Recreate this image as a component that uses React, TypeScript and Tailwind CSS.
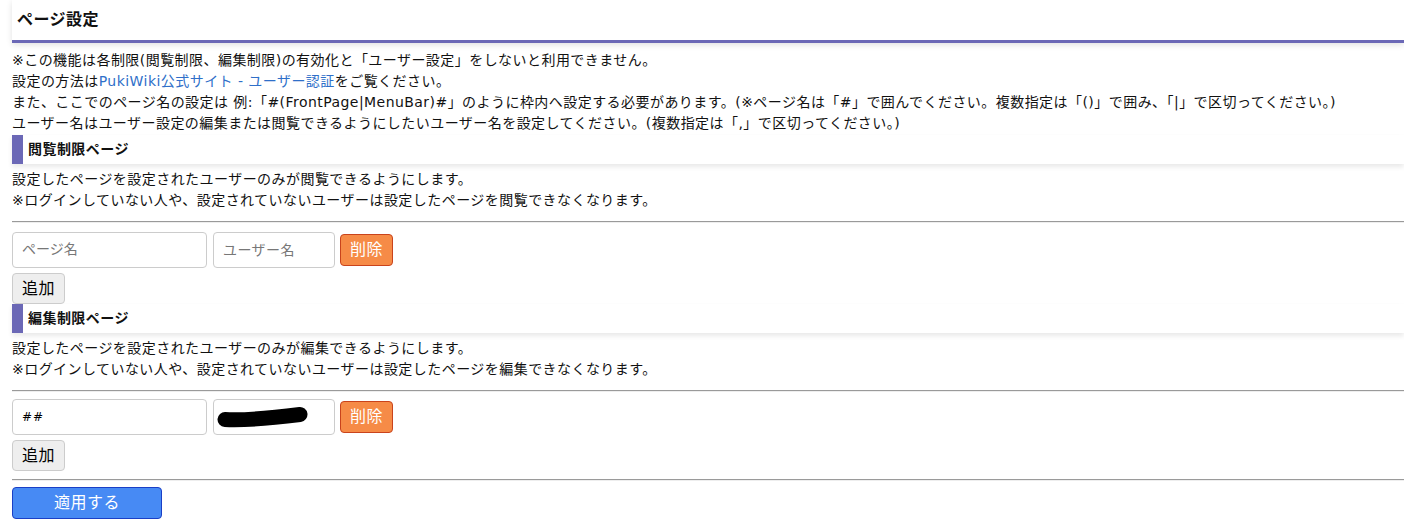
import React from 'react';

const Hr = ({ className = '' }: { className?: string }) => (
  <div className={`border-t border-b border-t-[#9a9a9a] border-b-[#eeeeee] ${className}`} />
);

const SectionHeader = ({ title }: { title: string }) => (
  <div className="flex h-[29px] items-center border-l-[11px] border-[#6b68b6] bg-white pl-[5px] text-[14px] font-bold shadow-[0_3px_5px_rgba(0,0,0,0.09)]">
    {title}
  </div>
);

interface RuleRowProps {
  page?: string;
  redacted?: boolean;
}

const RuleRow: React.FC<RuleRowProps> = ({ page, redacted }) => (
  <div className="flex items-center">
    <input
      type="text"
      placeholder="ページ名"
      defaultValue={page}
      className="h-[36px] w-[195px] rounded-[4px] border border-[#cccccc] bg-white px-[9px] text-[12px] tracking-[1px] text-black outline-none placeholder:text-[14px] placeholder:tracking-normal placeholder:text-[#777777]"
    />
    <div className="relative ml-[6px]">
      <input
        type="text"
        placeholder={redacted ? '' : 'ユーザー名'}
        className="h-[36px] w-[122px] rounded-[4px] border border-[#cccccc] bg-white px-[9px] text-[14px] outline-none placeholder:text-[#777777]"
      />
      {redacted && (
        <svg className="absolute left-0 top-0" width="122" height="36" viewBox="0 0 122 36">
          {/* redaction scribble */}
          <path
            d="M12 20.5 C 30 21.5, 55 19.5, 87 15.5"
            stroke="#000"
            strokeWidth="15"
            strokeLinecap="round"
            fill="none"
          />
        </svg>
      )}
    </div>
    <button
      type="button"
      className="ml-[5px] h-[32px] w-[53px] rounded-[4px] border border-[#c9431c] bg-[#f68b47] text-[16px] text-white"
    >
      削除
    </button>
  </div>
);

const AddButton = () => (
  <button
    type="button"
    className="mt-[5px] h-[31px] w-[53px] rounded-[4px] border border-[#cccccc] bg-[#eeeeee] text-[16px] text-black"
  >
    追加
  </button>
);

interface RestrictionSectionProps {
  title: string;
  verb: string;
  page?: string;
  redacted?: boolean;
  rowClass?: string;
}

const RestrictionSection: React.FC<RestrictionSectionProps> = ({ title, verb, page, redacted, rowClass = 'mt-[9px]' }) => (
  <div>
    <SectionHeader title={title} />
    <div className="mt-[5px] text-[14px] leading-[21px]">
      <p>設定したページを設定されたユーザーのみが{verb}できるようにします。</p>
      <p>※ログインしていない人や、設定されていないユーザーは設定したページを{verb}できなくなります。</p>
    </div>
    <Hr className="mt-[10px]" />
    <div className={rowClass}>
      <RuleRow page={page} redacted={redacted} />
    </div>
    <AddButton />
  </div>
);

const App: React.FC = () => {
  return (
    <div className="min-h-[529px] bg-white pl-[12px] font-['DejaVu_Sans','Noto_Sans_CJK_JP',sans-serif] tracking-[0.45px] text-[#111111]">
      <div className="flex h-[43px] items-center border-b-[3px] border-[#6b68b6] bg-white pl-[5px] text-[16px] font-bold shadow-[0_2px_6px_rgba(0,0,0,0.12)]">
        ページ設定
      </div>

      <div className="mt-[7px] text-[14px] leading-[21px]">
        <p>※この機能は各制限(閲覧制限、編集制限)の有効化と「ユーザー設定」をしないと利用できません。</p>
        <p>
          設定の方法は
          <a href="#" className="text-[#2f6fc9]">
            PukiWiki公式サイト - ユーザー認証
          </a>
          をご覧ください。
        </p>
        <p>
          また、ここでのページ名の設定は 例:「#(FrontPage|MenuBar)#」のように枠内へ設定する必要があります。(※ページ名は「#」で囲んでください。複数指定は「()」で囲み、「|」で区切ってください。)
        </p>
        <p>ユーザー名はユーザー設定の編集または閲覧できるようにしたいユーザー名を設定してください。(複数指定は「,」で区切ってください。)</p>
      </div>

      <div className="mt-[1px]">
        <RestrictionSection title="閲覧制限ページ" verb="閲覧" />
      </div>
      <RestrictionSection title="編集制限ページ" verb="編集" page="##" redacted rowClass="mt-[7px]" />

      <Hr className="mt-[8px]" />
      <button
        type="button"
        className="mt-[6px] h-[32px] w-[150px] rounded-[4px] border border-[#1a3fc6] bg-[#478af4] text-[16px] text-white"
      >
        適用する
      </button>
    </div>
  );
};

export default App;
